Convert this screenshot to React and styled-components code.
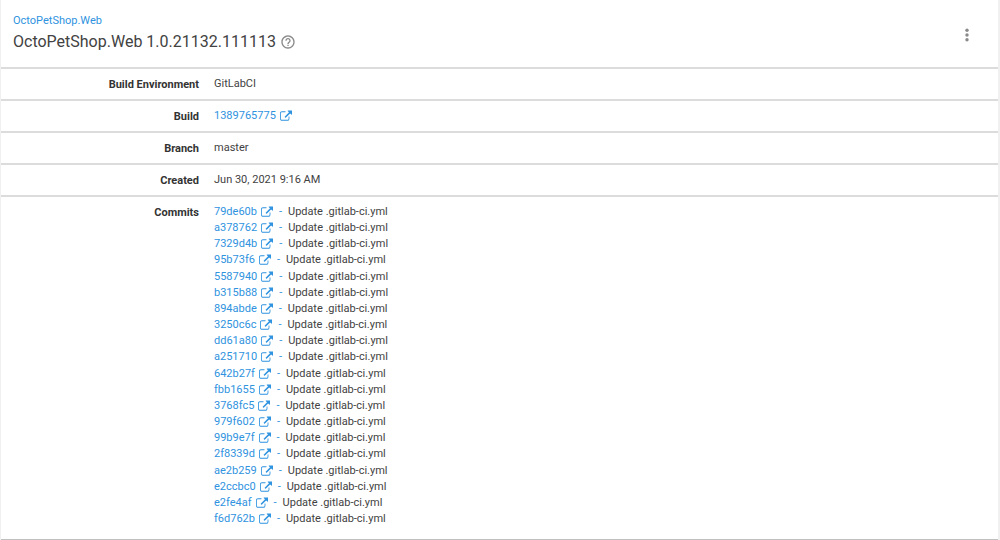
import styled, { createGlobalStyle } from "styled-components"

const GlobalStyle=createGlobalStyle`
* {
box-sizing: border-box;
}

body {
margin: 0;
background: #f0f0f0;
color: #424242;
font-family: Roboto, "Liberation Sans", sans-serif;
font-size: 11px;
line-height: 16px;
}
`

const Card=styled.main`
display: flex;
flex-direction: column;
min-height: 100vh;
margin: 0px 2px 0px 1px;
background: #ffffff;
border-bottom: 1px solid #c0c0c0;
`

const Header=styled.header`
display: flex;
justify-content: space-between;
align-items: center;
height: 67px;
padding: 0px 21px 0px 12px;
`

const Link=styled.a`
color: #2f93e0;
text-decoration: none;
`

const TitleRow=styled.div`
display: flex;
align-items: center;
gap: 4px;
`

const Title=styled.h1`
margin: 0;
font-size: 16px;
font-weight: 400;
line-height: 26px;
`

const IconButton=styled.button`
display: flex;
padding: 0;
border: 0;
background: none;
color: #8a8a8a;
cursor: pointer;
`

const Details=styled.dl`
display: flex;
flex-direction: column;
flex: 1;
margin: 0;
`

const Row=styled.div`
display: flex;
gap: 15px;
flex: ${(props) => (props.$grow ? "1" : "none")};
min-height: 32px;
padding: 7px 0px ${(props) => (props.$grow ? "12px" : "6px")};
border-top: 2px solid #dcdcdc;
`

const Label=styled.dt`
width: 198px;
padding-top: 1px;
color: #333333;
font-weight: 700;
text-align: right;
`

const Value=styled.dd`
display: flex;
flex: 1;
margin: 0;
`

const ExternalLink=styled(Link)`
display: inline-flex;
align-items: center;
gap: 4px;
height: 16px;
`

const Commits=styled.ul`
display: flex;
flex-direction: column;
justify-content: space-between;
margin: 0;
padding: 0;
list-style: none;
`

const Commit=styled.li`
display: flex;
`

const Dash=styled.span`
margin: 0px 6px;
color: #2f93e0;
`

const commits = [
    "79de60b", "a378762", "7329d4b", "95b73f6", "5587940",
    "b315b88", "894abde", "3250c6c", "dd61a80", "a251710",
    "642b27f", "fbb1655", "3768fc5", "979f602", "99b9e7f",
    "2f8339d", "ae2b259", "e2ccbc0", "e2fe4af", "f6d762b",
]

const ExternalIcon = () => (
    <svg width="12" height="12" viewBox="0 0 1792 1664" fill="currentColor" aria-hidden="true">
        <path d="M1408 928v320q0 119-84.500 203.500T1120 1536H288q-119 0-203.500-84.500T0 1248V416q0-119 84.500-203.500T288 128h504q14 0 23 9t9 23v64q0 14-9 23t-23 9H288q-66 0-113 47t-47 113v832q0 66 47 113t113 47h832q66 0 113-47t47-113V928q0-14 9-23t23-9h64q14 0 23 9t9 23zm384-864v512q0 26-19 45t-45 19-45-19l-176-176-652 652q-10 10-23 10t-23-10L695 983q-10-10-10-23t10-23l652-652-176-176q-19-19-19-45t19-45 45-19h531q26 0 45 19t19 45z"/>
    </svg>
)

const HelpIcon = () => (
    <svg width="16" height="16" viewBox="0 0 24 24" fill="currentColor" aria-hidden="true">
        <path d="M11 18h2v-2h-2v2zm1-16C6.480 2 2 6.480 2 12s4.480 10 10 10 10-4.480 10-10S17.520 2 12 2zm0 18c-4.410 0-8-3.590-8-8s3.590-8 8-8 8 3.590 8 8-3.590 8-8 8zm0-14c-2.210 0-4 1.790-4 4h2c0-1.100.9-2 2-2s2 .9 2 2c0 2-3 1.750-3 5h2c0-2.250 3-2.500 3-5 0-2.210-1.790-4-4-4z"/>
    </svg>
)

const MoreIcon = () => (
    <svg width="20" height="20" viewBox="0 0 20 20" fill="currentColor" aria-hidden="true">
        <circle cx="10" cy="6.300" r="1.700"/>
        <circle cx="10" cy="11" r="1.700"/>
        <circle cx="10" cy="15.700" r="1.700"/>
    </svg>
)

const App = () => {
    return (
        <>
            <GlobalStyle/>
            <Card>
                <Header>
                    <div>
                        <Link href="#package">OctoPetShop.Web</Link>
                        <TitleRow>
                            <Title>OctoPetShop.Web 1.0.21132.111113</Title>
                            <IconButton type="button" aria-label="Help"><HelpIcon/></IconButton>
                        </TitleRow>
                    </div>
                    <IconButton type="button" aria-label="More actions"><MoreIcon/></IconButton>
                </Header>
                <Details>
                    <Row>
                        <Label>Build Environment</Label>
                        <Value>GitLabCI</Value>
                    </Row>
                    <Row>
                        <Label>Build</Label>
                        <Value><ExternalLink href="#build">1389765775<ExternalIcon/></ExternalLink></Value>
                    </Row>
                    <Row>
                        <Label>Branch</Label>
                        <Value>master</Value>
                    </Row>
                    <Row>
                        <Label>Created</Label>
                        <Value>Jun 30, 2021 9:16 AM</Value>
                    </Row>
                    <Row $grow>
                        <Label>Commits</Label>
                        <Value>
                            <Commits>
                                {commits.map((hash) => (
                                    <Commit key={hash}>
                                        <ExternalLink href={`#${hash}`}>{hash}<ExternalIcon/></ExternalLink>
                                        <Dash>-</Dash>
                                        Update .gitlab-ci.yml
                                    </Commit>
                                ))}
                            </Commits>
                        </Value>
                    </Row>
                </Details>
            </Card>
        </>
    )
}

export default App
